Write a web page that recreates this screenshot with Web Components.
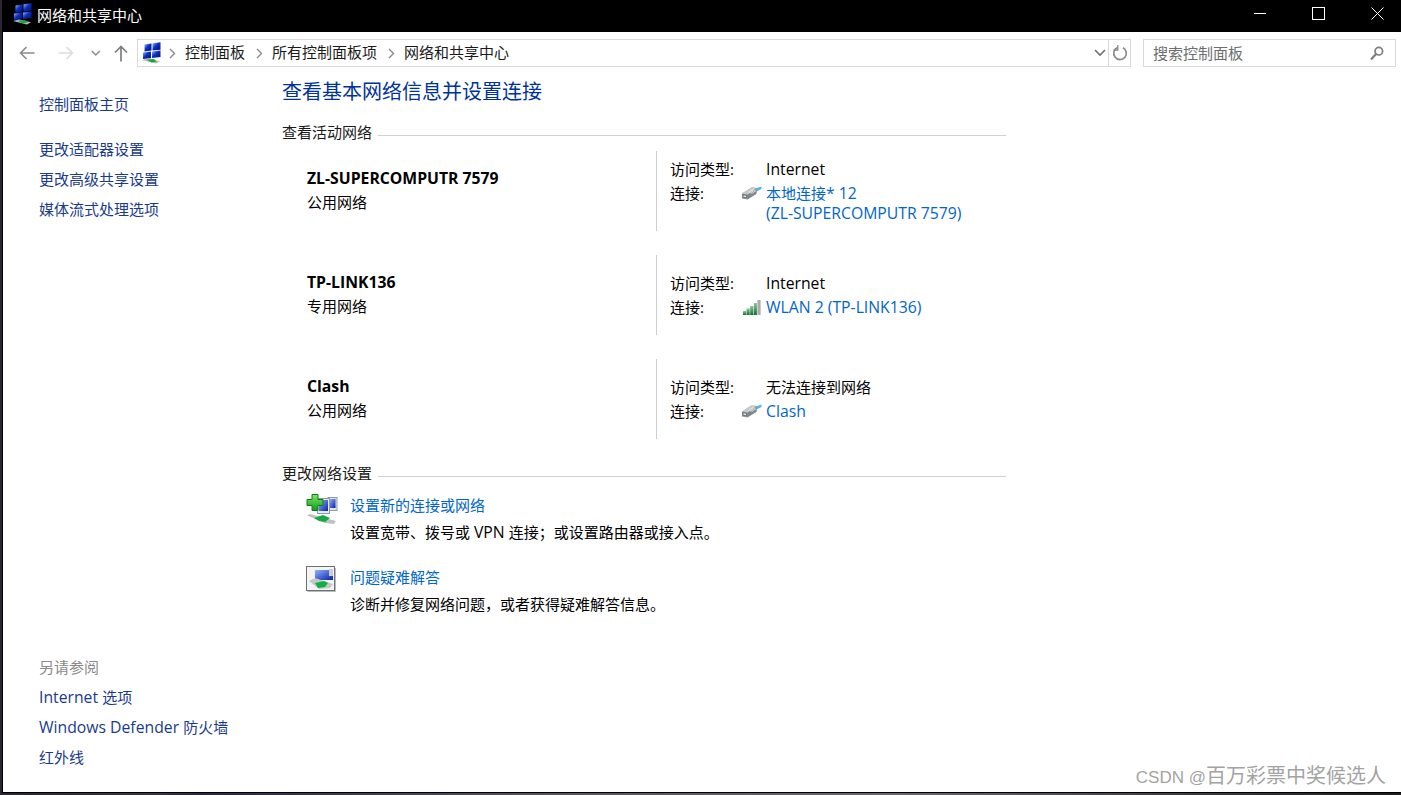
<!DOCTYPE html>
<html lang="zh-CN">
<head>
<meta charset="utf-8">
<title>网络和共享中心</title>
<style>
  html, body { margin: 0; height: 100%; overflow: hidden; }
  body {
    background: linear-gradient(90deg, #2b2730 0, #3a3640 150px, #2c2840 200px, #55525c 520px, #6a6670 900px, #1c1c1c 1401px);
    font: 15px/24px "Open Sans", "Noto Sans CJK SC", sans-serif;
    color: #000;
  }
</style>
</head>
<body>
<network-center></network-center>

<script>
const FONT = `"Open Sans", "Noto Sans CJK SC", sans-serif`;
// Latin runs come out a bit narrower than the reference at 15px, so they get their own size
const lat = s => s.replace(/[\x21-\x7e][\x20-\x7e]*/g, m => `<span class="l">${m}</span>`);

const ICONS = {
  network: `<svg width="22" height="22" viewBox="0 0 22 22">
    <defs><linearGradient id="b" x1="0" y1="0" x2="1" y2="1"><stop offset="0" stop-color="#9cc2ff"/><stop offset=".45" stop-color="#0b2fc4"/><stop offset="1" stop-color="#04125e"/></linearGradient></defs>
    <path d="M3.500 2.500l7-1v7l-7 1z" fill="url(#b)"/><path d="M11.500 1.300l8-1v7.500l-8 .8z" fill="url(#b)"/>
    <path d="M2 10.500l8-.9v6.600l-8 .8z" fill="url(#b)"/><path d="M11 9.500l8.500-1v6.600l-8.500 1z" fill="url(#b)"/>
    <path d="M1 18l6-1.500 12 2.700-4 2.300z" fill="#b4b8b4"/><path d="M6 17.700l7-.6 2.500 2.400-5 1z" fill="#14a838"/>
  </svg>`,
  plug: `<svg width="21" height="14" viewBox="0 0 21 14">
    <path d="M1 7.500L10.500 1.500l6 .5-1 6-9 5.500-5.500-1z" fill="#8f9499"/>
    <path d="M1 7.500l5.500 1 9-6.500-5-.8z" fill="#c6cace"/>
    <path d="M1.500 8l4.500 1v3.500l-4.500-1z" fill="#6e7377"/><path d="M2.500 9.200l2.500.5v1.500l-2.500-.5z" fill="#e6e8ea"/>
    <path d="M6.500 9l8.500-5.500v3.800L6.500 13z" fill="#7f8488"/>
    <path d="M7.500 6.800l5-3.500M9 7.300l5-3.500M10.500 7.800l4.500-3.200" stroke="#eef0f2" stroke-width=".8"/>
    <path d="M14.500 2.400L20.500.5v2.400L16 5.200z" fill="#58b2e6"/>
  </svg>`,
  signal: `<svg style="margin-left:2px" width="18" height="15" viewBox="0 0 18 15">
    <defs><linearGradient id="g" x1="0" y1="0" x2="0" y2="1"><stop offset="0" stop-color="#8ec79a"/><stop offset="1" stop-color="#0d6e30"/></linearGradient></defs>
    <rect x="0" y="11" width="3" height="4" fill="url(#g)"/><rect x="3.500" y="8.500" width="3.200" height="6.500" fill="url(#g)"/>
    <rect x="7.200" y="6" width="3.200" height="9" fill="url(#g)"/><rect x="10.900" y="3" width="3" height="12" fill="url(#g)"/>
    <rect x="14.400" y="0" width="3.200" height="15" fill="#a8acaa"/>
  </svg>`,
  add: `<svg width="32" height="31" viewBox="0 0 32 31">
    <defs>
      <linearGradient id="s" x1="0" y1="0" x2="1" y2="1"><stop offset="0" stop-color="#8fb2ff"/><stop offset="1" stop-color="#0a1fa8"/></linearGradient>
      <linearGradient id="p" x1="0" y1="0" x2="0" y2="1"><stop offset="0" stop-color="#7bea66"/><stop offset="1" stop-color="#109a1c"/></linearGradient>
    </defs>
    <rect x="22" y="3.500" width="9" height="13" fill="#dfe3ea" stroke="#8f98a8"/><rect x="23.500" y="5" width="6" height="9" fill="url(#s)"/>
    <rect x="11.500" y="4.500" width="12" height="15" fill="#e8ebf0" stroke="#8f98a8"/><rect x="13" y="6" width="9" height="11" fill="url(#s)"/>
    <path d="M6 .5h6v5h5v6h-5v5H6v-5H1v-6h5z" fill="url(#p)" stroke="#0f7c18"/>
    <path d="M1 21.500l3-1.500 26 7-2 3-9-1z" fill="#bfc3c0"/><path d="M8 24l9-3 7 3-5 4-6-1z" fill="#16ab42"/>
  </svg>`,
  repair: `<svg width="30" height="26" viewBox="0 0 30 26">
    <defs><linearGradient id="r" x1="0" y1="0" x2="1" y2="1"><stop offset="0" stop-color="#8fb2ff"/><stop offset="1" stop-color="#0a1fa8"/></linearGradient></defs>
    <rect x=".5" y=".5" width="28" height="24" fill="#f3f4f4" stroke="#6e7174"/>
    <path d="M1.500 25.500h28V2" fill="none" stroke="#b8babc"/>
    <path d="M9 4h18v10H9z" fill="url(#r)"/><path d="M23 3h4v7h-4z" fill="#c7ccd6"/>
    <path d="M3 15l6-3 18 6-3 4-11 1z" fill="#c4c7c5"/><path d="M9 17l9-2 4 2-3 4-7 1z" fill="#14ad44"/>
  </svg>`
};

function define(name, css, html) {
  customElements.define(name, class extends HTMLElement {
    connectedCallback() {
      if (this.shadowRoot) return;
      this.attachShadow({ mode: 'open' });
      this.shadowRoot.innerHTML = `<style>.l { font-size: 1.05em; } ${css}</style>${typeof html === 'function' ? html(this) : html}`;
    }
  });
}

define('win-icon', `:host { display: inline-flex; } svg { display: block; }`,
  el => ICONS[el.getAttribute('name')]);

define('title-bar', `
  :host { display: flex; align-items: center; height: 32px; background: #000; color: #fff; }
  .logo { margin-left: 9px; width: 25px; margin-top: -4px; }
  .name { flex: 1; font-size: 15px; line-height: 28px; padding-bottom: 3px; }
  .btns { display: flex; gap: 46px; padding-right: 17px; margin-top: -5px; }
  svg { display: block; }
`, `
  <win-icon class="logo" name="network"></win-icon>
  <span class="name"><slot></slot></span>
  <div class="btns">
    <svg width="13" height="13"><path d="M1 6.500h12" stroke="#fff"/></svg>
    <svg width="13" height="13"><rect x=".5" y=".5" width="12" height="12" fill="none" stroke="#fff"/></svg>
    <svg width="13" height="13"><path d="M.5.500l12 12M12.500.500l-12 12" stroke="#fff"/></svg>
  </div>
`);

define('nav-bar', `
  :host { display: flex; align-items: center; height: 28px; padding: 7px 5px 8px 0; box-sizing: content-box; }
  svg { display: block; }
  .nav { display: flex; width: 134px; align-items: center; flex: none; }
  .nav svg { flex: none; }
  .addr { flex: 1; height: 26px; display: flex; align-items: center; border: 1px solid #d9d9d9; margin-right: 12px; }
  .logo { margin: 0 6px 0 3px; }
  .crumb { display: flex; align-items: center; flex: 1; font-size: 15px; color: #1a1a1a; }
  .crumb span { margin-right: 11px; padding-bottom: 2px; }
  .crumb svg { margin-right: 9px; }
  .drop { width: 16px; display: flex; justify-content: center; }
  .refresh { width: 21px; height: 26px; border-left: 1px solid #d9d9d9; display: flex; justify-content: center; align-items: center; }
  .search { width: 242px; height: 26px; border: 1px solid #d9d9d9; display: flex; align-items: center; justify-content: space-between; padding: 0 0 0 9px; box-sizing: content-box; flex: none; }
  .search span { color: #6d6d6d; font-size: 15px; }
  .search svg { margin-right: 11px; }
`, `
  <div class="nav">
    <svg style="margin-left:16px" width="16" height="14"><path d="M15.500 7H1.500M7.500 1L1.500 7l6 6" fill="none" stroke="#8a8a8a" stroke-width="1.600"/></svg>
    <svg style="margin-left:23px" width="16" height="14"><path d="M.5 7h14M8.500 1l6 6-6 6" fill="none" stroke="#dcdcdc" stroke-width="1.600"/></svg>
    <svg style="margin-left:17px" width="10" height="7"><path d="M.8 1l4 4 4-4" fill="none" stroke="#8a8a8a" stroke-width="1.500"/></svg>
    <svg style="margin-left:13px" width="14" height="17"><path d="M7 16.500V1.500M1 7.500l6-6 6 6" fill="none" stroke="#7e7e7e" stroke-width="1.700"/></svg>
  </div>
  <div class="addr">
    <win-icon class="logo" name="network"></win-icon>
    <div class="crumb">
      <svg width="7" height="11"><path d="M1 1l4.500 4.500L1 10" fill="none" stroke="#8a8a8a" stroke-width="1.400"/></svg>
      <span>控制面板</span>
      <svg width="7" height="11"><path d="M1 1l4.500 4.500L1 10" fill="none" stroke="#8a8a8a" stroke-width="1.400"/></svg>
      <span>所有控制面板项</span>
      <svg width="7" height="11"><path d="M1 1l4.500 4.500L1 10" fill="none" stroke="#8a8a8a" stroke-width="1.400"/></svg>
      <span>网络和共享中心</span>
    </div>
    <div class="drop"><svg width="12" height="8"><path d="M1 1l5 5 5-5" fill="none" stroke="#6f6f6f" stroke-width="1.600"/></svg></div>
    <div class="refresh"><svg width="16" height="16" viewBox="0 0 16 16"><path d="M5.500 2.500a6.300 6.300 0 1 0 5.500.2" fill="none" stroke="#8a8a8a" stroke-width="1.700"/><path d="M5.800 0v5H1.500" fill="none" stroke="#8a8a8a" stroke-width="1.300"/></svg></div>
  </div>
  <div class="search">
    <span>搜索控制面板</span>
    <svg width="14" height="15" viewBox="0 0 14 15"><circle cx="8.800" cy="5.200" r="3.800" fill="none" stroke="#7d7d7d" stroke-width="1.700"/><path d="M6 8L1 13.500" stroke="#7d7d7d" stroke-width="2.200"/></svg>
  </div>
`);

define('side-nav', `
  :host { display: flex; flex-direction: column; justify-content: space-between; width: 279px; box-sizing: border-box; padding: 0 0 20px 36px; flex: none; }
  .top { padding-top: 14px; }
`, `<div class="top"><slot name="top"></slot></div><div><slot name="bottom"></slot></div>`);

define('side-link', `
  :host { display: block; line-height: 30px; height: 30px; color: #1a3b8c; font-size: 15px; white-space: nowrap; }
  :host([muted]) { color: #8a8a8a; }
  :host([gap]) { margin-bottom: 15px; }
`, `<slot></slot>`);

define('section-head', `
  :host { display: flex; align-items: center; height: 24px; color: #1a1a1a; width: 724px; }
  .rule { flex: 1; height: 1px; background: #d0d0d0; margin: 6px 0 0 6px; }
  span { font-size: 15px; }
`, `<span><slot></slot></span><div class="rule"></div>`);

define('net-card', `
  :host { display: flex; width: 724px; height: 80px; }
  .left { width: 374px; padding: 15px 0 0 25px; box-sizing: border-box; }
  .name { font-weight: 700; }
  .right { flex: 1; border-left: 1px solid #cfcfcf; padding-left: 13px; display: grid; grid-template-columns: 72px 24px 1fr; grid-auto-rows: min-content; align-content: center; margin-right: 0; }
  .ic { display: flex; align-items: center; height: 24px; margin-left: -1px; }
  .link { color: #0066cc; line-height: 20px; padding: 2px 0; }
  .val { grid-column: 2 / 4; padding-left: 24px; }
`, el => `
  <div class="left">
    <div class="name">${lat(el.getAttribute('name'))}</div>
    <div>${el.getAttribute('kind')}</div>
  </div>
  <div class="right">
    <div>访问类型:</div><div class="val">${lat(el.getAttribute('access'))}</div>
    <div>连接:</div>
    <div class="ic"><win-icon name="${el.getAttribute('icon')}"></win-icon></div>
    <div class="link"><slot></slot></div>
  </div>
`);

define('task-item', `
  :host { display: flex; width: 724px; padding-left: 24px; box-sizing: border-box; }
  .ic { width: 44px; padding-top: 1px; }
  .t { color: #0066cc; line-height: 24px; }
  .d { line-height: 24px; margin-top: 3px; }
`, el => `
  <div class="ic"><win-icon name="${el.getAttribute('icon')}"></win-icon></div>
  <div><div class="t">${el.getAttribute('heading')}</div><div class="d"><slot></slot></div></div>
`);

define('network-center', `
  :host { display: flex; flex-direction: column; height: 793px; box-sizing: border-box; margin-left: 2px; border: solid #000; border-width: 0 0 1px 1px; background: #fff; font-family: ${FONT}; position: relative; }
  .body { flex: 1; display: flex; min-height: 0; }
  main { flex: 1; padding-top: 1px; }
  h1 { margin: 0; font-weight: 400; font-size: 20px; line-height: 32px; color: #003399; }
  .cards { display: flex; flex-direction: column; }
  .mark { position: absolute; right: 15px; top: 761px; font-size: 20px; line-height: 30px; color: #a3a3a3; font-family: "Liberation Sans", "Noto Sans CJK SC", sans-serif; }
  .mark span { font-size: 17px; }
`, `
  <title-bar>网络和共享中心</title-bar>
  <nav-bar></nav-bar>
  <div class="body">
    <side-nav>
      <side-link slot="top" gap>控制面板主页</side-link>
      <side-link slot="top">更改适配器设置</side-link>
      <side-link slot="top">更改高级共享设置</side-link>
      <side-link slot="top">媒体流式处理选项</side-link>
      <side-link slot="bottom" muted>另请参阅</side-link>
      <side-link slot="bottom">${lat('Internet ')}选项</side-link>
      <side-link slot="bottom">${lat('Windows Defender ')}防火墙</side-link>
      <side-link slot="bottom">红外线</side-link>
    </side-nav>
    <main>
      <h1>查看基本网络信息并设置连接</h1>
      <section-head style="margin-top:12px">查看活动网络</section-head>
      <div class="cards">
        <net-card style="margin-top:7px" name="ZL-SUPERCOMPUTR 7579" kind="公用网络" access="Internet" icon="plug">本地连接${lat('* 12')}<br>${lat('(ZL-SUPERCOMPUTR 7579)')}</net-card>
        <net-card style="margin-top:24px" name="TP-LINK136" kind="专用网络" access="Internet" icon="signal">${lat('WLAN 2 (TP-LINK136)')}</net-card>
        <net-card style="margin-top:24px" name="Clash" kind="公用网络" access="无法连接到网络" icon="plug">${lat('Clash')}</net-card>
      </div>
      <section-head style="margin-top:22px">更改网络设置</section-head>
      <task-item style="margin-top:8px" icon="add" heading="设置新的连接或网络">设置宽带、拨号或 ${lat('VPN ')}连接；或设置路由器或接入点。</task-item>
      <task-item style="margin-top:21px" icon="repair" heading="问题疑难解答">诊断并修复网络问题，或者获得疑难解答信息。</task-item>
    </main>
  </div>
  <div class="mark"><span>CSDN @</span>百万彩票中奖候选人</div>
`);
</script>
</body>
</html>
